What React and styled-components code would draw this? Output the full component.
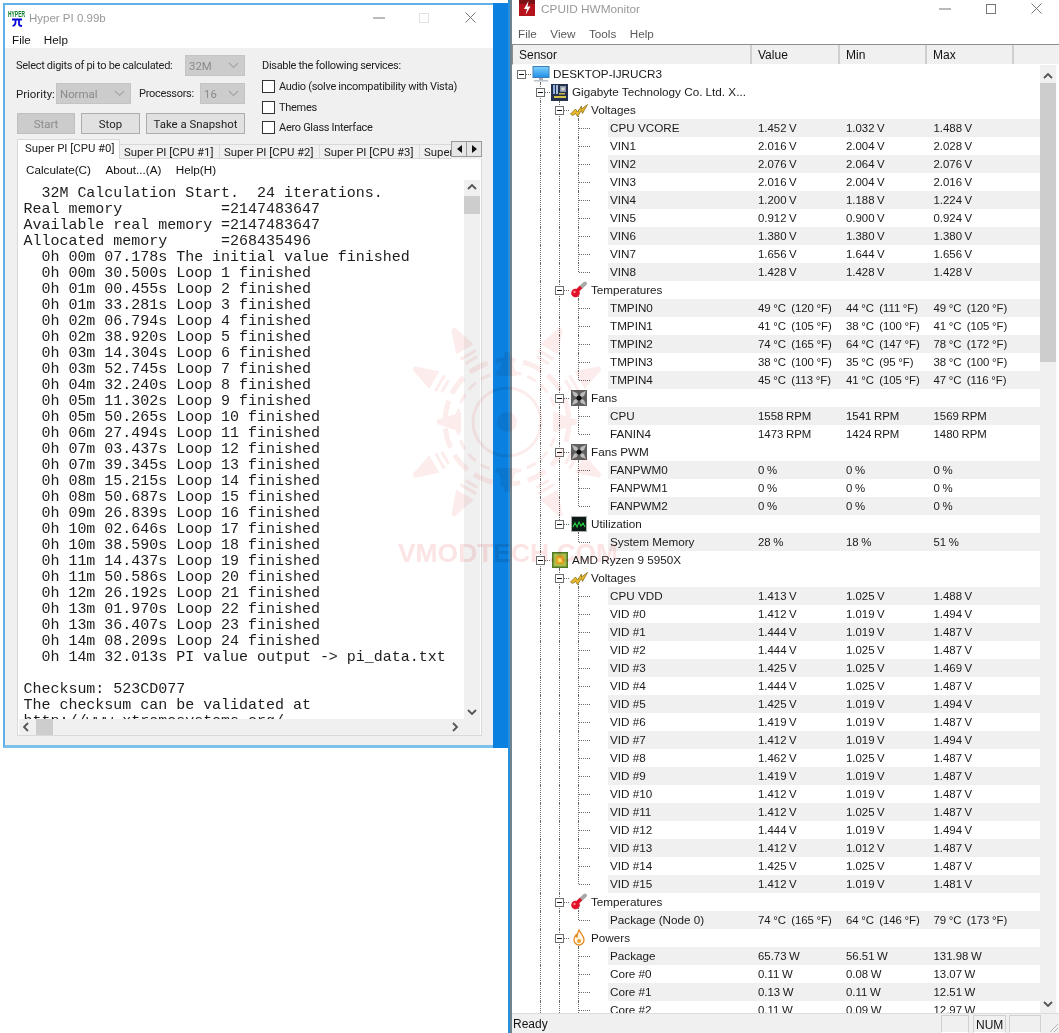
import React from "react";
import styled, { createGlobalStyle } from "styled-components";

const Global = createGlobalStyle`
  html, body { margin: 0; padding: 0; background: #fff; }
  * { box-sizing: border-box; }
`;

const UI = `Roboto, "Liberation Sans", Arial, sans-serif`;
const HW = `"Liberation Sans", Arial, sans-serif`;

const Page = styled.div`
  position: relative; width: 1059px; height: 1033px; display: flex; overflow: hidden;
  background: #fff; font-family: ${UI}; font-size: 11.4px; color: #222;
`;
const LeftPane = styled.div`width: 508px; flex: none; padding: 3px 0 0 3px;`;
const Desktop = styled.div`background: #0a80e0; padding-right: 15px; height: 745px;`;
const HyperWindow = styled.div`
  height: 745px; display: flex; flex-direction: column; background: #f0f0f0;
  border-style: solid; border-color: #62b0e6 transparent #7cc0ee #62b0e6; border-width: 2px 0 3px 2px;
`;
const Edge = styled.div`width: 4px; flex: none; background: linear-gradient(90deg, #2a8fdc 0 50%, #71828f 50% 100%);`;

const HyperTitle = styled.div`height: 25px; flex: none; display: flex; align-items: center; background: #fff; padding-left: 3px;`;
const TitleText = styled.span`color: #999; font-family: ${HW}; font-size: ${p => p.$fs}px; margin-left: ${p => p.$gap}px; flex: 1; white-space: nowrap;`;
const WinBtn = styled.span`width: ${p => p.$w}px; height: 100%; display: flex; align-items: center; justify-content: center; flex: none;`;
const MenuBar = styled.div`
  flex: none; display: flex; background: #fff; height: ${p => p.$h}px; padding: ${p => p.$pt || 0}px 0 0 ${p => p.$pl}px; gap: ${p => p.$gap}px;
  align-items: center; font-family: ${HW}; font-size: 11.7px; color: ${p => p.$c || "#111"};
`;
const HyperBody = styled.div`flex: 1; min-height: 0; padding: 7px 11px 9px; display: flex; flex-direction: column;`;
const Controls = styled.div`display: flex; gap: 17px; height: 79px; flex: none;`;
const LeftControls = styled.div`width: 229px; flex: none; display: flex; flex-direction: column;`;
const Caption = styled.span`font-size: 11px; letter-spacing: -0.3px; white-space: nowrap;`;
const DigitsRow = styled.div`display: flex; justify-content: space-between; align-items: center; height: 21px; white-space: nowrap;`;
const PrioRow = styled.div`display: grid; grid-template-columns: 40px 75px 1fr 45px; align-items: center; height: 21px; margin-top: 7px;`;
const ProcLabel = styled(Caption)`padding-left: 8px;`;
const BtnRow = styled.div`display: flex; gap: 6px; padding-left: 1px; margin-top: 9px;`;
const Combo = styled.div`
  height: 21px; width: ${p => p.$w}px; background: #ccc; border: 1px solid #c4c4c4; color: #8a8a8a;
  display: flex; align-items: center; justify-content: space-between; padding: 0 5px 0 3px;
`;
const Btn = styled.div`
  height: 21px; width: ${p => p.$w}px; display: flex; align-items: center; justify-content: center;
  background: ${p => (p.$off ? "#ccc" : "#e1e1e1")}; border: 1px solid ${p => (p.$off ? "#bfbfbf" : "#adadad")};
  color: ${p => (p.$off ? "#8a8a8a" : "#222")};
`;
const Services = styled.div`display: flex; flex-direction: column; white-space: nowrap;`;
const ServicesTitle = styled.div`height: 21px; flex: none; display: flex; align-items: center;`;
const CheckRow = styled.div`height: 20.7px; flex: none; display: flex; align-items: center; gap: 4px;`;
const Check = styled.span`width: 13px; height: 13px; background: #fff; border: 1px solid #333; flex: none;`;

const TabRow = styled.div`display: flex; height: 20px; margin: 5px 0 0 1px; flex: none; width: 465px;`;
const TabClip = styled.div`display: flex; flex: 1; min-width: 0; overflow: hidden; align-items: flex-end;`;
const Tab = styled.div`
  flex: none; white-space: nowrap; width: ${p => (p.$on ? 103 : 100)}px; height: ${p => (p.$on ? 20 : 15)}px;
  padding: ${p => (p.$on ? "0 0 4px 7px" : "0 0 0 4px")}; display: flex; align-items: center; background: ${p => (p.$on ? "#fff" : "#f0f0f0")};
  border: 1px solid #d9d9d9; border-width: ${p => (p.$on ? "1px 1px 0 1px" : "1px 1px 1px 0")};
`;
const Spin = styled.div`display: flex; flex: none; margin-top: 2px; height: 16px;`;
const SpinBtn = styled.span`width: 16px; height: 16px; background: #e6e6e6; border: 1px solid #9a9a9a; margin-left: ${p => (p.$next ? "-1px" : 0)}; display: flex; align-items: center; justify-content: center;`;

const Panel = styled.div`
  flex: 1; min-height: 0; width: 465px; margin-left: 1px; background: #fff; border: 1px solid #d9d9d9; border-top: 0; padding: 0 1px;
  display: flex; flex-direction: column;
`;
const ConsoleMain = styled.div`flex: 1; min-height: 0; display: flex;`;
const ConsoleText = styled.pre`
  flex: 1; min-width: 0; margin: 0; padding: 6px 0 0 4.5px; overflow: hidden; background: #fff; color: #1c1c1c; letter-spacing: -0.02px;
  font: 15px/16px "Liberation Mono", "Courier New", monospace;
`;
const VScroll = styled.div`width: 16px; flex: none; background: #f0f0f0; display: flex; flex-direction: column; align-items: center; justify-content: space-between; position: relative; padding: 3px 0;`;
const VThumb = styled.span`position: absolute; left: 0; top: ${p => p.$top}px; width: 100%; height: ${p => p.$h}px; background: #cdcdcd;`;
const HScroll = styled.div`height: 16px; flex: none; background: #f0f0f0; display: flex; align-items: center; justify-content: space-between; padding: 0 21px 0 3px; position: relative;`;
const HThumb = styled.span`position: absolute; left: 17px; top: 0; width: 17px; height: 100%; background: #cdcdcd;`;

/* HWMonitor */
const HwWindow = styled.div`flex: 1; min-width: 0; display: flex; flex-direction: column; background: #fff; font-family: ${HW};`;
const HwTitle = styled.div`height: 20px; flex: none; display: flex; align-items: flex-start; padding: 0 0 0 7px;`;
const HwTitleText = styled(TitleText)`line-height: 19px;`;
const HwBtn = styled(WinBtn)`height: 17px;`;
const Header = styled.div`
  flex: none; height: 21px; display: grid; grid-template-columns: 239px 88px 87px 87px 1fr; background: #f0f0f0;
  border-top: 1px solid #8e8e8e; border-left: 1px solid #8e8e8e; border-bottom: 1px solid #fff; font-size: 12px; color: #111;
`;
const HeadCell = styled.div`padding-left: ${p => p.$pl}px; display: flex; align-items: center; border-right: 2px solid #cfcfcf; height: 100%;`;
const TreeArea = styled.div`flex: 1; min-height: 0; display: flex; overflow: hidden;`;
const Tree = styled.div`flex: 1; min-width: 0; overflow: hidden;`;
const HwScroll = styled.div`width: 16px; flex: none; margin-right: 3px; background: #f0f0f0; position: relative; display: flex; flex-direction: column; align-items: center; justify-content: space-between; padding: 7px 0 5px;`;
const Row = styled.div`display: flex; height: 18px; white-space: pre; font-size: 11.7px; color: #1a1a1a;`;
const Guide = styled.span`
  position: relative; flex: none; width: 19px; height: 18px; display: flex; align-items: center; justify-content: center;
  &::before {
    content: ""; position: absolute; left: 9px; border-left: 1px dotted #6a6a6a;
    display: ${p => (p.$v === "none" ? "none" : "block")};
    top: ${p => (p.$v === "down" ? "9px" : "0")};
    height: ${p => (p.$v === "through" ? "18px" : "9px")};
  }
  &::after {
    content: ""; position: absolute; left: 10px; top: 9px; border-top: 1px dotted #6a6a6a;
    display: ${p => (p.$h ? "block" : "none")}; width: ${p => p.$h}px;
  }
`;
const Box = styled.span`
  position: relative; z-index: 1; width: 9px; height: 9px; background: #fff; border: 1px solid #6e6e6e; display: flex; align-items: center; justify-content: center;
  &::before { content: ""; width: 5px; height: 1px; background: #111; }
`;
const IconSlot = styled(Guide)`z-index: 1; svg { position: relative; z-index: 1; }`;
const GroupLabel = styled.span`padding-left: 3px; line-height: 18px;`;
const Band = styled.div`
  display: grid; grid-template-columns: 148px 88px 87.5px 1fr; width: 432px; height: 18px; margin-left: 20px; padding-left: 2px;
  line-height: 18px; background: ${p => (p.$alt ? "#f0f0f0" : "#fff")};
`;
const Val = styled.span`font-size: 11.4px; word-spacing: -0.6px;`;
const Status = styled.div`flex: none; height: 20px; background: #f0f0f0; border-top: 1px solid #dcdcdc; display: flex; align-items: center; font-size: 12px; padding-left: 1px; color: #111;`;
const StatusText = styled.span`flex: 1;`;
const StatusCell = styled.span`width: ${p => p.$w}px; height: 18px; margin-left: ${p => p.$ml}px; border: 1px solid #d0d0d0; border-bottom-color: #fff; padding-left: 2px; line-height: 18px;`;
const Grip = styled.span`width: 18px; height: 18px; display: flex; align-items: flex-end; justify-content: flex-end;`;

const Watermark = styled.svg`position: absolute; left: 380px; top: 310px; mix-blend-mode: multiply; pointer-events: none; z-index: 5;`;

/* Drawings */
const Chevron = ({ d = "up", c = "#555" }) => {
  const pts = { up: "1,6 5,2 9,6", down: "1,2 5,6 9,2", left: "6,1 2,5 6,9", right: "2,1 6,5 2,9" }[d];
  const size = d === "up" || d === "down" ? [10, 8] : [8, 10];
  return <svg width={size[0]} height={size[1]} viewBox={`0 0 ${size[0]} ${size[1]}`}><polyline points={pts} fill="none" stroke={c} strokeWidth="1.8" /></svg>;
};
const ComboArrow = () => <svg width="11" height="7" viewBox="0 0 11 7"><polyline points="1,1 5.5,5.5 10,1" fill="none" stroke="#a5a5a5" strokeWidth="1.1" /></svg>;
const Tri = ({ d }) => <svg width="5" height="8" viewBox="0 0 5 8"><polygon points={d === "l" ? "5,0 5,8 0,4" : "0,0 0,8 5,4"} fill="#111" /></svg>;
const Min = ({ w = 12 }) => <svg width={w} height="2" viewBox={`0 0 ${w} 2`}><rect y="0.5" width={w} height="1" fill="#777" /></svg>;
const Max = ({ c = "#777", s = 10 }) => <svg width={s} height={s} viewBox={`0 0 ${s} ${s}`}><rect x=".5" y=".5" width={s - 1} height={s - 1} fill="none" stroke={c} /></svg>;
const Close = () => <svg width="11" height="11" viewBox="0 0 11 11"><path d="M.5.5l10 10M10.5.5l-10 10" stroke="#777" fill="none" /></svg>;

const HyperIcon = () => (
  <svg width="18" height="18" viewBox="0 0 18 18">
    <text x="0" y="8" fontSize="9" fontFamily="Liberation Sans Narrow, Liberation Sans" fontWeight="700" fill="#0c7f2a" textLength="17" lengthAdjust="spacingAndGlyphs">HYPER</text>
    <path d="M4 10.500h10M7.500 10.500v3c0 2-1 3-3 3.500M11 10.500v4.500c0 1 1 2 3 2" stroke="#0808d8" strokeWidth="1.800" fill="none" />
  </svg>
);
const CpuidIcon = () => (
  <svg width="16" height="16" viewBox="0 0 16 16">
    <rect width="16" height="16" fill="#b5121b" />
    <rect width="16" height="4" fill="#7c1116" />
    <path d="M9.500 1L5 9h3l-1.500 6L11.500 6.500h-3z" fill="#fff" />
  </svg>
);
const Icon = ({ k }) => {
  if (k === "pc") return (
    <svg width="18" height="16" viewBox="0 0 18 16"><defs><linearGradient id="sc" x1="0" y1="0" x2="0" y2="1"><stop offset="0" stopColor="#7fd0fa" /><stop offset="1" stopColor="#1f8fe8" /></linearGradient></defs>
      <rect x="1" y="0.500" width="16" height="11" fill="url(#sc)" stroke="#3e7fb8" /><rect x="7" y="12" width="4" height="2" fill="#aab" /><rect x="2" y="14" width="14" height="1.500" fill="#b9c2cc" /></svg>
  );
  if (k === "board") return (
    <svg width="17" height="17" viewBox="0 0 17 17"><rect width="17" height="17" fill="#25304f" />
      <rect x="2" y="1" width="2" height="9" fill="#8fb0e0" /><rect x="5" y="1" width="2" height="9" fill="#a8bede" /><rect x="9" y="2" width="6" height="6" fill="#8a94a8" /><rect x="10.500" y="3.500" width="3" height="3" fill="#d8d8d0" />
      <rect x="3" y="12" width="12" height="2" fill="#d6c24a" /><rect x="8" y="9" width="6" height="1.500" fill="#c9b84a" /></svg>
  );
  if (k === "volt") return (
    <svg width="18" height="14" viewBox="0 0 18 14"><path d="M0.500 11l5-5 2 3 4-6 0 3 6-4.500-5 9-1-3-4 6-2-3-3 2z" fill="#e8b92a" stroke="#7d6210" strokeWidth=".7" /></svg>
  );
  if (k === "temp") return (
    <svg width="18" height="18" viewBox="0 0 18 18"><path d="M9 8L15 2.500" stroke="#a8a8a8" strokeWidth="3.800" strokeLinecap="round" /><path d="M6 11L11 6" stroke="#e01028" strokeWidth="3.600" /><circle cx="5.500" cy="12" r="4.300" fill="#e01028" /><circle cx="4.500" cy="11" r="1.200" fill="#ff8a90" /></svg>
  );
  if (k === "fan") return (
    <svg width="16" height="16" viewBox="0 0 16 16"><rect width="16" height="16" fill="#606060" />
      <path d="M1 1l5 2 2 5-5-2zM15 1l-2 5-5 2 2-5zM15 15l-5-2-2-5 5 2zM1 15l2-5 5-2-2 5z" fill="#bdbdbd" /><circle cx="8" cy="8" r="2.600" fill="#111" /></svg>
  );
  if (k === "util") return (
    <svg width="16" height="16" viewBox="0 0 16 16"><rect x=".5" y=".5" width="15" height="15" fill="#0c1c14" stroke="#b0b0b0" /><polyline points="2,11 4,7 6,11 8,6 10,10 12,7 14,11" fill="none" stroke="#25d84a" strokeWidth="1.100" /></svg>
  );
  if (k === "chip") return (
    <svg width="16" height="16" viewBox="0 0 16 16"><rect width="16" height="16" fill="#4f7a24" /><rect x="1.500" y="1.500" width="13" height="13" fill="#a9bb4e" /><rect x="4" y="4" width="8" height="8" fill="#e0a51c" /><rect x="6" y="6" width="4" height="4" fill="#f6d768" /></svg>
  );
  return (
    <svg width="16" height="18" viewBox="0 0 16 18"><path d="M8 1c1 3 5 5 5 10a5 5 0 0 1-10 0c0-2 1-4 2-5 0 2 1 2 1 2 0-3 1-5 2-7z" fill="#fff6e8" stroke="#e78a1e" strokeWidth="1.300" /><circle cx="8" cy="12" r="2" fill="#f0a030" /></svg>
  );
};

const WatermarkArt = () => {
  const cx = 127, cy = 112, c = "#e23030";
  const spokes = [];
  [-150, -120, -60, -30, 30, 60, 120, 150, 0, 180, 90, -90].forEach((deg, i) => {
    const a = deg * Math.PI / 180;
    const main = i < 8;
    const p = (r, off) => `${cx + r * Math.cos(a) - off * Math.sin(a)},${cy + r * Math.sin(a) + off * Math.cos(a)}`;
    spokes.push(<polygon key={i} points={`${p(main ? 84 : 46, 10)} ${p(main ? 84 : 46, -10)} ${p(main ? 108 : 70, -2)} ${p(main ? 108 : 70, 2)}`} fill={c} />);
  });
  const rungs = [-60, -30, 30, 60, 120, 150, 210, 240].map(d => (
    <g key={d} transform={`rotate(${d} ${cx} ${cy})`} fill={c}>
      <rect x={cx - 9} y={cy - 79} width="18" height="3" /><rect x={cx - 7} y={cy - 73} width="14" height="3" />
    </g>
  ));
  return (
    <Watermark width="280" height="270" viewBox="0 0 280 270">
      <g opacity="0.09">
        {spokes}{rungs}
        <circle cx={cx} cy={cy} r="62" fill="none" stroke={c} strokeWidth="5" strokeDasharray="20 8" />
        <circle cx={cx} cy={cy} r="50" fill="none" stroke={c} strokeWidth="3" strokeDasharray="10 6" />
        <circle cx={cx} cy={cy} r="34" fill="none" stroke={c} strokeWidth="3" />
        <circle cx={cx} cy={cy} r="10" fill={c} />
      </g>
      <text x="128" y="252" textAnchor="middle" fontFamily="Liberation Sans" fontWeight="700" fontSize="25" fill={c} opacity="0.13" textLength="220" lengthAdjust="spacingAndGlyphs">VMODTECH.COM</text>
    </Watermark>
  );
};

/* Data */
const consoleLines = [
  "  32M Calculation Start.  24 iterations.",
  "Real memory           =2147483647",
  "Available real memory =2147483647",
  "Allocated memory      =268435496",
  "  0h 00m 07.178s The initial value finished",
  "  0h 00m 30.500s Loop 1 finished",
  "  0h 01m 00.455s Loop 2 finished",
  "  0h 01m 33.281s Loop 3 finished",
  "  0h 02m 06.794s Loop 4 finished",
  "  0h 02m 38.920s Loop 5 finished",
  "  0h 03m 14.304s Loop 6 finished",
  "  0h 03m 52.745s Loop 7 finished",
  "  0h 04m 32.240s Loop 8 finished",
  "  0h 05m 11.302s Loop 9 finished",
  "  0h 05m 50.265s Loop 10 finished",
  "  0h 06m 27.494s Loop 11 finished",
  "  0h 07m 03.437s Loop 12 finished",
  "  0h 07m 39.345s Loop 13 finished",
  "  0h 08m 15.215s Loop 14 finished",
  "  0h 08m 50.687s Loop 15 finished",
  "  0h 09m 26.839s Loop 16 finished",
  "  0h 10m 02.646s Loop 17 finished",
  "  0h 10m 38.590s Loop 18 finished",
  "  0h 11m 14.437s Loop 19 finished",
  "  0h 11m 50.586s Loop 20 finished",
  "  0h 12m 26.192s Loop 21 finished",
  "  0h 13m 01.970s Loop 22 finished",
  "  0h 13m 36.407s Loop 23 finished",
  "  0h 14m 08.209s Loop 24 finished",
  "  0h 14m 32.013s PI value output -> pi_data.txt",
  "",
  "Checksum: 523CD077",
  "The checksum can be validated at",
  "http://www.xtremesystems.org/",
].join("\n");

const g = (d, icon, label) => ({ d, icon, label });
const l = (name, v, min, max) => ({ d: 3, name, v, min, max });
const t = (x, y) => `${x} °C  (${y} °F)`;
const V = (name, a, b, c) => l(name, `${a} V`, `${b} V`, `${c} V`);
const W = (name, a, b, c) => l(name, `${a} W`, `${b} W`, `${c} W`);
const P = name => l(name, "0 %", "0 %", "0 %");
const rows = [
  g(0, "pc", "DESKTOP-IJRUCR3"),
  g(1, "board", "Gigabyte Technology Co. Ltd. X..."),
  g(2, "volt", "Voltages"),
  V("CPU VCORE", "1.452", "1.032", "1.488"),
  V("VIN1", "2.016", "2.004", "2.028"),
  V("VIN2", "2.076", "2.064", "2.076"),
  V("VIN3", "2.016", "2.004", "2.016"),
  V("VIN4", "1.200", "1.188", "1.224"),
  V("VIN5", "0.912", "0.900", "0.924"),
  V("VIN6", "1.380", "1.380", "1.380"),
  V("VIN7", "1.656", "1.644", "1.656"),
  V("VIN8", "1.428", "1.428", "1.428"),
  g(2, "temp", "Temperatures"),
  l("TMPIN0", t(49, 120), t(44, 111), t(49, 120)),
  l("TMPIN1", t(41, 105), t(38, 100), t(41, 105)),
  l("TMPIN2", t(74, 165), t(64, 147), t(78, 172)),
  l("TMPIN3", t(38, 100), t(35, 95), t(38, 100)),
  l("TMPIN4", t(45, 113), t(41, 105), t(47, 116)),
  g(2, "fan", "Fans"),
  l("CPU", "1558 RPM", "1541 RPM", "1569 RPM"),
  l("FANIN4", "1473 RPM", "1424 RPM", "1480 RPM"),
  g(2, "fan", "Fans PWM"),
  P("FANPWM0"), P("FANPWM1"), P("FANPWM2"),
  g(2, "util", "Utilization"),
  l("System Memory", "28 %", "18 %", "51 %"),
  g(1, "chip", "AMD Ryzen 9 5950X"),
  g(2, "volt", "Voltages"),
  V("CPU VDD", "1.413", "1.025", "1.488"),
  V("VID #0", "1.412", "1.019", "1.494"),
  V("VID #1", "1.444", "1.019", "1.487"),
  V("VID #2", "1.444", "1.025", "1.487"),
  V("VID #3", "1.425", "1.025", "1.469"),
  V("VID #4", "1.444", "1.025", "1.487"),
  V("VID #5", "1.425", "1.019", "1.494"),
  V("VID #6", "1.419", "1.019", "1.487"),
  V("VID #7", "1.412", "1.019", "1.494"),
  V("VID #8", "1.462", "1.025", "1.487"),
  V("VID #9", "1.419", "1.019", "1.487"),
  V("VID #10", "1.412", "1.019", "1.487"),
  V("VID #11", "1.412", "1.025", "1.487"),
  V("VID #12", "1.444", "1.019", "1.494"),
  V("VID #13", "1.412", "1.012", "1.487"),
  V("VID #14", "1.425", "1.025", "1.487"),
  V("VID #15", "1.412", "1.019", "1.481"),
  g(2, "temp", "Temperatures"),
  l("Package (Node 0)", t(74, 165), t(64, 146), t(79, 173)),
  g(2, "power", "Powers"),
  W("Package", "65.73", "56.51", "131.98"),
  W("Core #0", "0.11", "0.08", "13.07"),
  W("Core #1", "0.13", "0.11", "12.51"),
  W("Core #2", "0.11", "0.09", "12.97"),
];

/* zebra: the first leaf of each group is shaded, then every other one */
let zebra = 0;
rows.forEach(r => {
  if (r.d === 3) { r.alt = zebra % 2 === 0; zebra++; } else zebra = 0;
});

/* what a column's vertical line does on row i */
const hasLaterSibling = (i, d, open) => {
  for (let j = i + 1; j < rows.length; j++) {
    if (rows[j].d === d) return true;
    if (rows[j].d < d) return false;
  }
  return open;
};
const lineFor = (i, c) => {
  const r = rows[i];
  if (c === 0) return "none";
  const later = hasLaterSibling(i, c, true);
  if (r.d === c) return later ? "through" : "up";
  if (r.d > c) return later ? "through" : "none";
  return "none";
};

const TreeRow = ({ i }) => {
  const r = rows[i];
  const cols = [0, 1, 2, 3].slice(0, r.d + 1);
  const leaf = r.d === 3;
  return (
    <Row>
      {cols.map(c => (
        <Guide key={c} $v={lineFor(i, c)} $h={c === r.d ? (leaf ? 11 : 9) : 0}>
          {c === r.d && !leaf && <Box />}
        </Guide>
      ))}
      {leaf ? (
        <Band $alt={r.alt}>
          <span>{r.name}</span><Val>{r.v}</Val><Val>{r.min}</Val><Val>{r.max}</Val>
        </Band>
      ) : (
        <>
          <IconSlot $v="down"><Icon k={r.icon} /></IconSlot>
          <GroupLabel>{r.label}</GroupLabel>
        </>
      )}
    </Row>
  );
};

const tabs = ["Super PI [CPU #1]", "Super PI [CPU #2]", "Super PI [CPU #3]", "Super PI [CPU #4]"];

export default function App() {
  return (
    <Page>
      <Global />
      <LeftPane>
        <Desktop>
          <HyperWindow>
            <HyperTitle>
              <HyperIcon />
              <TitleText $gap={3} $fs={11.5}>Hyper PI 0.99b</TitleText>
              <WinBtn $w={45}><Min /></WinBtn>
              <WinBtn $w={46}><Max c="#e0e0e0" /></WinBtn>
              <WinBtn $w={46}><Close /></WinBtn>
            </HyperTitle>
            <MenuBar $h={18} $pl={7} $gap={13}><span>File</span><span>Help</span></MenuBar>
            <HyperBody>
              <Controls>
                <LeftControls>
                  <DigitsRow>
                    <Caption>Select digits of pi to be calculated:</Caption>
                    <Combo $w={60}>32M<ComboArrow /></Combo>
                  </DigitsRow>
                  <PrioRow>
                    <span>Priority:</span>
                    <Combo $w={75}>Normal<ComboArrow /></Combo>
                    <ProcLabel>Processors:</ProcLabel>
                    <Combo $w={45}>16<ComboArrow /></Combo>
                  </PrioRow>
                  <BtnRow>
                    <Btn $w={58} $off>Start</Btn>
                    <Btn $w={59}>Stop</Btn>
                    <Btn $w={99}>Take a Snapshot</Btn>
                  </BtnRow>
                </LeftControls>
                <Services>
                  <ServicesTitle><Caption>Disable the following services:</Caption></ServicesTitle>
                  <CheckRow><Check /><Caption>Audio (solve incompatibility with Vista)</Caption></CheckRow>
                  <CheckRow><Check /><Caption>Themes</Caption></CheckRow>
                  <CheckRow><Check /><Caption>Aero Glass Interface</Caption></CheckRow>
                </Services>
              </Controls>
              <TabRow>
                <TabClip>
                  <Tab $on>Super PI [CPU #0]</Tab>
                  {tabs.map(x => <Tab key={x}>{x}</Tab>)}
                </TabClip>
                <Spin><SpinBtn><Tri d="l" /></SpinBtn><SpinBtn $next><Tri d="r" /></SpinBtn></Spin>
              </TabRow>
              <Panel>
                <MenuBar $h={21} $pl={7} $gap={14.5}><span>Calculate(C)</span><span>About...(A)</span><span>Help(H)</span></MenuBar>
                <ConsoleMain>
                  <ConsoleText>{consoleLines}</ConsoleText>
                  <VScroll>
                    <Chevron d="up" />
                    <VThumb $top={16} $h={18} />
                    <Chevron d="down" />
                  </VScroll>
                </ConsoleMain>
                <HScroll>
                  <Chevron d="left" />
                  <HThumb />
                  <Chevron d="right" />
                </HScroll>
              </Panel>
            </HyperBody>
          </HyperWindow>
        </Desktop>
      </LeftPane>
      <Edge />
      <HwWindow>
        <HwTitle>
          <CpuidIcon />
          <HwTitleText $gap={6} $fs={11.8}>CPUID HWMonitor</HwTitleText>
          <HwBtn $w={46}><Min /></HwBtn>
          <HwBtn $w={46}><Max /></HwBtn>
          <HwBtn $w={45}><Close /></HwBtn>
        </HwTitle>
        <MenuBar $h={24} $pt={2} $pl={6} $gap={13.5} $c="#5a5a5a"><span>File</span><span>View</span><span>Tools</span><span>Help</span></MenuBar>
        <Header>
          <HeadCell $pl={6}>Sensor</HeadCell>
          <HeadCell $pl={6}>Value</HeadCell>
          <HeadCell $pl={6}>Min</HeadCell>
          <HeadCell $pl={6}>Max</HeadCell>
          <span />
        </Header>
        <TreeArea>
          <Tree>
            {rows.map((_, i) => <TreeRow key={i} i={i} />)}
          </Tree>
          <HwScroll>
            <Chevron d="up" />
            <VThumb $top={18} $h={279} />
            <Chevron d="down" />
          </HwScroll>
        </TreeArea>
        <Status>
          <StatusText>Ready</StatusText>
          <StatusCell $w={28} $ml={0} />
          <StatusCell $w={33} $ml={4}>NUM</StatusCell>
          <StatusCell $w={32} $ml={3} />
          <Grip>
            <svg width="12" height="12" viewBox="0 0 12 12"><path d="M11 3L3 11M11 7L7 11" stroke="#b5b5b5" /></svg>
          </Grip>
        </Status>
      </HwWindow>
      <WatermarkArt />
    </Page>
  );
}
